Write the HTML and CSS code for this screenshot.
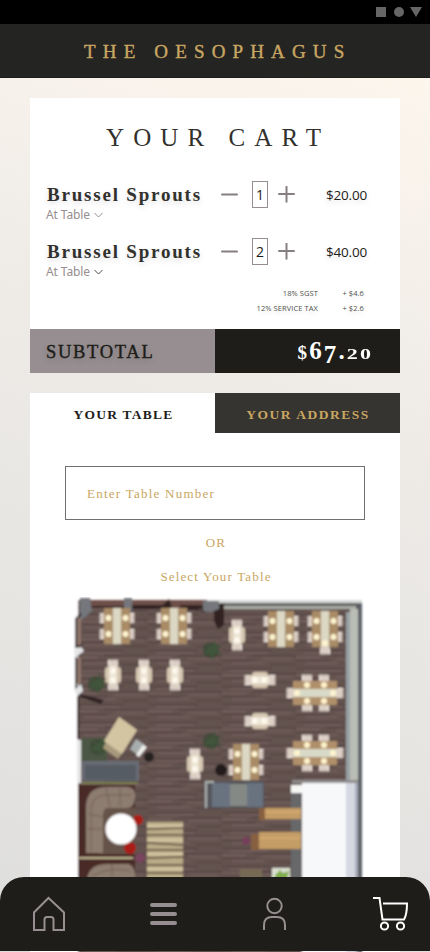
FILE: index.html
```html
<!DOCTYPE html>
<html lang="en">
<head>
<meta charset="utf-8">
<title>The Oesophagus – Your Cart</title>
<link rel="stylesheet" href="styles.css">
</head>
<body>
<div class="phone">
  <div class="status">
    <svg width="48" height="12" viewBox="0 0 48 12" fill="#666"><path d="M1 1h10v10H1z"/><circle cx="24" cy="6" r="5"/><path d="M35 1h12l-6 10z"/></svg>
  </div>
  <header class="brand"><span>THE OESOPHAGUS</span></header>
  <main class="content">
    <section class="cart">
      <h1 class="title">YOUR CART</h1>
      <div class="item">
        <div class="name">Brussel Sprouts</div>
        <svg class="minus" width="17" height="17" viewBox="0 0 17 17"><path d="M1 8.500h15"/></svg>
        <div class="qty">1</div>
        <svg class="plus" width="17" height="17" viewBox="0 0 17 17"><path d="M1 8h15M8.500 .8v15"/></svg>
        <div class="price">$20.00</div>
        <div class="place">At Table <svg width="9" height="6" viewBox="0 0 9 6"><path d="M.5 1l4 4 4-4"/></svg></div>
      </div>
      <div class="item">
        <div class="name">Brussel Sprouts</div>
        <svg class="minus" width="17" height="17" viewBox="0 0 17 17"><path d="M1 8.500h15"/></svg>
        <div class="qty">2</div>
        <svg class="plus" width="17" height="17" viewBox="0 0 17 17"><path d="M1 8h15M8.500 .8v15"/></svg>
        <div class="price">$40.00</div>
        <div class="place dark">At Table <svg width="9" height="6" viewBox="0 0 9 6"><path d="M.5 1l4 4 4-4"/></svg></div>
      </div>
      <div class="taxes">
        <span>18% SGST</span><span>+ $4.6</span>
        <span>12% SERVICE TAX</span><span>+ $2.6</span>
      </div>
      <div class="subtotal">
        <div class="label">SUBTOTAL</div>
        <div class="total"><span class="cur">$</span><span>6</span><span class="low">7</span><span>.</span><span class="small">20</span></div>
      </div>
    </section>
    <section class="seating">
      <div class="tabs"><div class="tab active">YOUR TABLE</div><div class="tab">YOUR ADDRESS</div></div>
      <div class="field"><span>Enter Table Number</span></div>
      <div class="or">OR</div>
      <div class="select">Select Your Table</div>
      <svg class="plan" width="300" height="355" viewBox="66 597 300 355">
        <defs>
          <pattern id="wood" width="74" height="18" patternUnits="userSpaceOnUse">
            <path fill="#645250" d="M0 0h74v18H0z"/>
            <path stroke="#4f403f" d="M0 2.500h50M30 7.500h44M0 12.500h34M48 16.500h26"/>
            <path stroke="#7b6664" d="M8 5h38M0 9.500h24M40 11h30M10 15h32"/>
          </pattern>
          <filter id="soft"><feGaussianBlur stdDeviation=".85"/></filter>
          <g id="chair"><rect x="-4" y="-5" width="8" height="10" rx="1.500" fill="#dccfc5"/><path d="M3.400-4.500v9" stroke="#8f817d" stroke-width="1.200"/><path d="M-2-4.500h5" stroke="#f7eee6"/></g>
          <g id="four">
            <use href="#chair" x="14" y="-8"/><use href="#chair" x="14" y="8"/>
            <use href="#chair" transform="translate(-14 -8) rotate(180)"/><use href="#chair" transform="translate(-14 8) rotate(180)"/>
            <path fill="#a98b66" d="M-13-18h26v36h-26z"/><path fill="#dcd8c4" d="M-4-18h8v36h-8z"/>
            <g fill="#fff5d2"><circle cx="-8.500" cy="-8" r="3"/><circle cx="8.500" cy="-8" r="3"/><circle cx="-8.500" cy="8" r="3"/><circle cx="8.500" cy="8" r="3"/></g>
          </g>
          <g id="two">
            <use href="#chair" transform="translate(0 -12) rotate(-90)"/><use href="#chair" transform="translate(0 12) rotate(90)"/>
            <rect x="-8" y="-8" width="16" height="16" rx="3" fill="#d6c8b2"/><path fill="#eee4d4" d="M-4-9h8V9h-8z"/>
            <circle cy="-4" r="2.700" fill="#fffaf0"/><circle cy="5" r="2.700" fill="#fffaf0"/>
          </g>
          <g id="six">
            <use href="#chair" transform="translate(-8 -15) rotate(-90)"/><use href="#chair" transform="translate(9 -15) rotate(-90)"/>
            <use href="#chair" transform="translate(-8 15) rotate(90)"/><use href="#chair" transform="translate(9 15) rotate(90)"/>
            <use href="#chair" x="25"/><use href="#chair" transform="translate(-25 0) rotate(180)"/>
            <path fill="#b0906a" d="M-22-12h44v24h-44z"/><path fill="#d9d9c8" d="M-22-4h44v8h-44z"/>
            <g fill="#fff4cf"><circle cx="-8" cy="-8" r="3"/><circle cx="9" cy="-8" r="3"/><circle cx="-8" cy="8" r="3"/><circle cx="9" cy="8" r="3"/><circle cx="-18" r="3"/><circle cx="18" r="3"/></g>
          </g>
          <g id="plant"><circle r="8" fill="#3a4634" opacity=".75"/><path d="M-9-2l7 1-4-7 6 5 4-8v8l7-3-5 6 5 5-8-2-1 7-4-7-6 4 3-6z" fill="#40553a"/></g>
        </defs>
        <g filter="url(#soft)">
          <path fill="url(#wood)" d="M78 600h283v360H78z"/>
          <!-- outer walls -->
          <path fill="#d5d8d7" d="M207 600h155v4H207z"/>
          <path fill="#5c5f60" d="M207 603h155v3H207z"/>
          <path fill="#a9ada6" d="M222 606h134v3H222z"/>
          <path fill="#6e5049" d="M90 600h116v8H90z"/>
          <path fill="#302321" d="M90 606h33l8-2v8l-9-4H90zM132 605h36v4h-36zM161 607l8-8 3 8-3 3zM180 605h22l-3 5h-19zM200 606l8-3 4 3-9 7zM214 606l10-3v22l-6 4-4-8z"/>
          <path fill="#74777c" d="M80 598h10l2 13-12 10zM124 598h8v14l-8-3zM203 601h16v8l-8 3-8-1z"/>
          <path fill="#b9bdb6" d="M350 609h8v171h-8z"/>
          <path fill="#9aa0a6" d="M346 612h4v168h-4z"/>
          <path fill="#5b6067" d="M358 603h4v357h-4z"/>
          <path fill="#fff" d="M66 597h12v363H66z"/>
          <path fill="none" stroke="#2c2425" stroke-width="2" d="M81 614l-5 5v28l6-3M81 653l-5 3v32l5-3"/>
          <path fill="#8d7369" d="M77 618h4v27h-4zM77 658h4v26h-4z"/>
          <path fill="#e6e6e8" d="M74 650l7-3 3 4-9 7zM74 690l7-6 2 7-6 5zM77 740h4v43h-4z"/>
          <path fill="#2e2424" d="M77 696h2v43h-2zM80 694l24 6-3 4-21-7z"/>
          <!-- seating -->
          <use href="#four" x="117" y="626"/><use href="#four" x="174" y="626"/>
          <use href="#four" x="281" y="629"/><use href="#four" x="325" y="629"/>
          <use href="#chair" transform="translate(325 651) rotate(90)"/><circle cx="325" cy="643" r="3" fill="#fff4cf"/>
          <use href="#two" x="113" y="675"/><use href="#two" x="144" y="675"/><use href="#two" x="175" y="675"/>
          <use href="#two" x="237" y="635"/><use href="#two" x="195" y="764"/>
          <use href="#two" transform="translate(260 680) rotate(90)"/><use href="#two" transform="translate(260 721) rotate(90)"/>
          <use href="#six" x="315" y="693"/><use href="#six" x="315" y="753"/>
          <circle cx="221" cy="770" r="6" fill="#201c1e"/>
          <use href="#four" x="246" y="762"/>
          <use href="#plant" x="96" y="684"/><use href="#plant" x="211" y="650"/><use href="#plant" x="211" y="741"/>
          <!-- reception desk -->
          <path fill="#4c5744" d="M81 738h26v25H81z"/>
          <use href="#plant" x="98" y="747"/>
          <path fill="#a79a7b" d="M119 717l18 13-19 29-15-11z"/><path fill="#d3c5a2" d="M119 717l18 13-15 24-18-13z"/>
          <circle cx="149" cy="757" r="5" fill="#252224"/><path fill="#a7adad" d="M136 739l9 6-6 11-9-7z"/><path fill="#f2f2ef" d="M143 745l4 2-8 10-3-2z"/>
          <path fill="#676c75" d="M82 761h57v20H82z"/><path fill="#575b63" d="M85 765h51v15H85z"/>
          <path stroke="#7c8051" stroke-width="2" d="M82 783h56"/>
          <!-- lounge -->
          <path fill="#4a2b28" d="M78 785h57v73H78zM78 859h57v20H78z"/>
          <path fill="#65524a" d="M99 808h37v46H99z"/>
          <path fill="#8d7c70" d="M86 853v-47q1-19 20-19h21q9 0 8 11t-9 10h-18q-5 0-5 8v37z"/>
          <path fill="none" stroke="#706056" d="M91 851v-43q2-13 15-13h25M87 829h16M88 814l16 3M106 788l4 19M120 788v18"/>
          <circle cx="138" cy="820" r="5" fill="#aa1c15"/><circle cx="130" cy="848" r="6" fill="#aa1c15"/><circle cx="140" cy="858" r="5" fill="#79445f"/>
          <circle cx="121" cy="829" r="15.500" fill="#fff"/>
          <path stroke="#bcb391" stroke-width="2" d="M79 858h54"/>
          <path fill="#8d7c70" d="M87 879q2-15 20-15h22q7 3 6 15z"/><path fill="none" stroke="#706056" d="M92 876q20-10 38-5M112 864v13"/>
          <!-- striped rug -->
          <path fill="#b9ab87" d="M147 822h36v57h-36z"/>
          <path stroke="#554238" stroke-width="1.500" d="M147 829l36-1M147 835h36M147 843l36 2M147 850h36M147 858l36-1M147 865h36M147 873h36"/>
          <path stroke="#d6cba7" stroke-width="2" d="M147 826h36M147 840h36M147 854h36M147 869h36"/>
          <!-- bar -->
          <path fill="#54575b" d="M204 781h60v27h-60z"/><path fill="#69727f" d="M212 783h18v24h-18zM247 783h16v24h-16z"/><path fill="#858986" d="M230 784h17v22h-17z"/><path fill="none" stroke="#aeb1ae" stroke-width="2" d="M206 808v-26h8"/>
          <!-- bright side room -->
          <path fill="#66686a" d="M291 786h10v93h-10z"/>
          <path fill="#f7f8fa" d="M302 783h44v177h-44z"/><path fill="#d6d8e1" d="M346 783h9v177h-9z"/><path fill="#a8abb9" d="M355 783h3v177h-3z"/>
          <path fill="#8f8d8d" d="M292 780h66v3h-66z"/><path fill="#f7f7f4" d="M291 785h11v8h-11z"/>
          <!-- counters -->
          <path fill="#87613f" d="M259 808h6v12h-6zM251 834h8v16h-8z"/>
          <path fill="#c49c65" d="M265 808h36v11h-36zM259 832h42v17h-42z"/><path stroke="#dfb77b" d="M265 812h36M259 838h42"/>
          <circle cx="246" cy="841" r="4" fill="#76405a"/><path fill="#776a55" d="M240 869h22v10h-22z"/>
          <path fill="#dce1d3" d="M272 868h18v11h-18z"/><path fill="#80ad4c" d="M275 875l5-5 3 3 6-2-2 8h-12z"/>
        </g>
      </svg>
    </section>
  </main>
  <nav class="nav">
    <svg width="34" height="36" viewBox="0 0 34 36"><path d="M2 34V16.500L16.500 2 32 16.500V34H21.500V23.500q0-2.500-2.500-2.500h-4q-2.500 0-2.500 2.500V34z"/></svg>
    <svg class="menu" width="28" height="24" viewBox="0 0 28 24"><path d="M2 3h23M2 12h23M2 21h23"/></svg>
    <svg width="26" height="34" viewBox="0 0 26 34"><circle cx="12.500" cy="9" r="7.200"/><path d="M2 33v-5q0-8 8-8h5q8 0 8 8v5"/></svg>
    <svg class="basket" width="36" height="36" viewBox="0 0 36 36"><path d="M1 2h6.500l3 21.500h21.500q3-5 3-16H11"/><circle cx="12.500" cy="30" r="3.600"/><circle cx="28.500" cy="30" r="3.600"/></svg>
  </nav>
</div>
</body>
</html>
```
FILE: styles.css
```css
* { box-sizing: border-box; }
body { margin: 0; }
svg { display: block; }
.phone {
  position: relative;
  width: 430px;
  height: 952px;
  overflow: hidden;
  background: linear-gradient(20deg, #dededd 0%, #eeebe7 60%, #fff8ee 100%);
  font-family: "Liberation Serif", serif;
  color: #32312d;
  white-space: nowrap;
}
.status {
  height: 24px;
  background: #000;
  display: flex;
  justify-content: flex-end;
  align-items: center;
  padding-right: 7px;
}
.brand {
  height: 54px;
  background: #242422;
  border-bottom: 1px solid #1e1d19;
  color: #c9a662;
  font-size: 19px;
  letter-spacing: 7.15px;
  -webkit-text-stroke: 0.4px #c9a662;
  line-height: 55px;
  padding-left: 84px;
}
.content { padding: 20px 30px 0; }
.cart { height: 275px; background: #fff; }
.title {
  margin: 0;
  height: 68px;
  padding: 8px 0 0 76px;
  font-size: 25px;
  font-weight: 400;
  letter-spacing: 9.1px;
  line-height: 64px;
}
.item {
  height: 57px;
  display: grid;
  grid-template-columns: 175px 31px 26px 17px 1fr;
  grid-template-rows: 28px 17px;
  align-items: center;
  padding: 14px 33px 0 16px;
}
.name {
  padding: 2px 0 0 1px;
  font-size: 19px;
  font-weight: 700;
  letter-spacing: 1.8px;
  text-shadow: 0 3px 6px #0002;
}
.minus, .plus { fill: none; stroke: #857f80; stroke-width: 2; stroke-linecap: round; }
.qty {
  width: 16px;
  height: 27px;
  border: 1px solid #968e90;
  font: 14px/26px "Open Sans", "Noto Sans", sans-serif;
  text-align: center;
  color: #1e1d19;
}
.price {
  padding-top: 1px;
  font: 13.5px "Open Sans", "Noto Sans", sans-serif;
  letter-spacing: -0.2px;
  text-align: right;
  color: #1e1d19;
  text-shadow: 0 3px 6px #0002;
}
.place {
  grid-column: 1 / -1;
  display: flex;
  align-items: center;
  gap: 4px;
  font: 12px/14px "Noto Sans", sans-serif;
  letter-spacing: -0.1px;
  color: #968e90;
  align-self: start;
}
.place svg { fill: none; stroke: #968e90; }
.dark svg { stroke: #4b4948; }
.taxes {
  height: 49px;
  padding: 6px 36px 0 0;
  display: grid;
  grid-template-columns: 288px 46px;
  grid-template-rows: 15px 15px;
  align-content: start;
  text-align: right;
  align-items: center;
  font: 7.5px/15px "Open Sans", "Noto Sans", sans-serif;
  letter-spacing: 0.08px;
  color: #51504d;
  text-shadow: 0 3px 5px #0002;
}
.subtotal { height: 44px; display: grid; grid-template-columns: 1fr 1fr; grid-template-rows: 44px; }
.label {
  background: #968e90;
  color: #1e1d19;
  padding-left: 16px;
  font-size: 18.5px;
  line-height: 46px;
  letter-spacing: 1.7px;
  -webkit-text-stroke: 0.4px #1e1d19;
  text-shadow: 0 3px 6px #0003;
}
.total {
  background: #1e1d19;
  color: #fff;
  display: flex;
  justify-content: flex-end;
  align-items: baseline;
  padding-right: 27px;
  font-size: 25px;
  line-height: 43px;
  font-weight: 700;
  letter-spacing: 2.1px;
}
.cur { font-size: 19px; }
.low { position: relative; top: 4px; }
.small { font-size: 22px; transform: scaleY(0.68); transform-origin: 50% 66%; }
.seating { height: 559px; margin-top: 20px; background: #fff; overflow: hidden; }
.tabs { display: grid; grid-template-columns: 1fr 1fr; grid-template-rows: 40px; height: 40px; }
.tab {
  background: #353430;
  color: #c9a662;
  font-size: 13.5px;
  font-weight: 700;
  letter-spacing: 1.5px;
  line-height: 43px;
  padding-left: 1px;
  text-align: center;
}
.active { background: #fff; color: #1e1d19; letter-spacing: 1.25px; padding-left: 2px; }
.field {
  width: 300px;
  height: 54px;
  margin: 33px auto 0;
  border: 1px solid #707070;
  padding-left: 21px;
  line-height: 54px;
}
.field, .or, .select { font-size: 13px; letter-spacing: 1.25px; color: #c9a662; }
.or { height: 44px; line-height: 46px; text-align: center; padding-left: 2px; }
.select { height: 33px; line-height: 26px; text-align: center; padding-left: 2px; letter-spacing: 1.15px; }
.plan { margin-left: 36px; }
.nav {
  position: absolute;
  left: 0;
  right: 0;
  bottom: 1px;
  height: 74px;
  border-radius: 24px 24px 0 0;
  background: #1e1d19;
  display: flex;
  justify-content: space-between;
  align-items: center;
  padding: 0 22px 0 32px;
}
.nav svg { fill: none; stroke: #968e90; stroke-width: 2; }
.nav .menu { stroke-width: 4; stroke-linecap: round; }
.nav .basket { stroke: #fff; }
```
